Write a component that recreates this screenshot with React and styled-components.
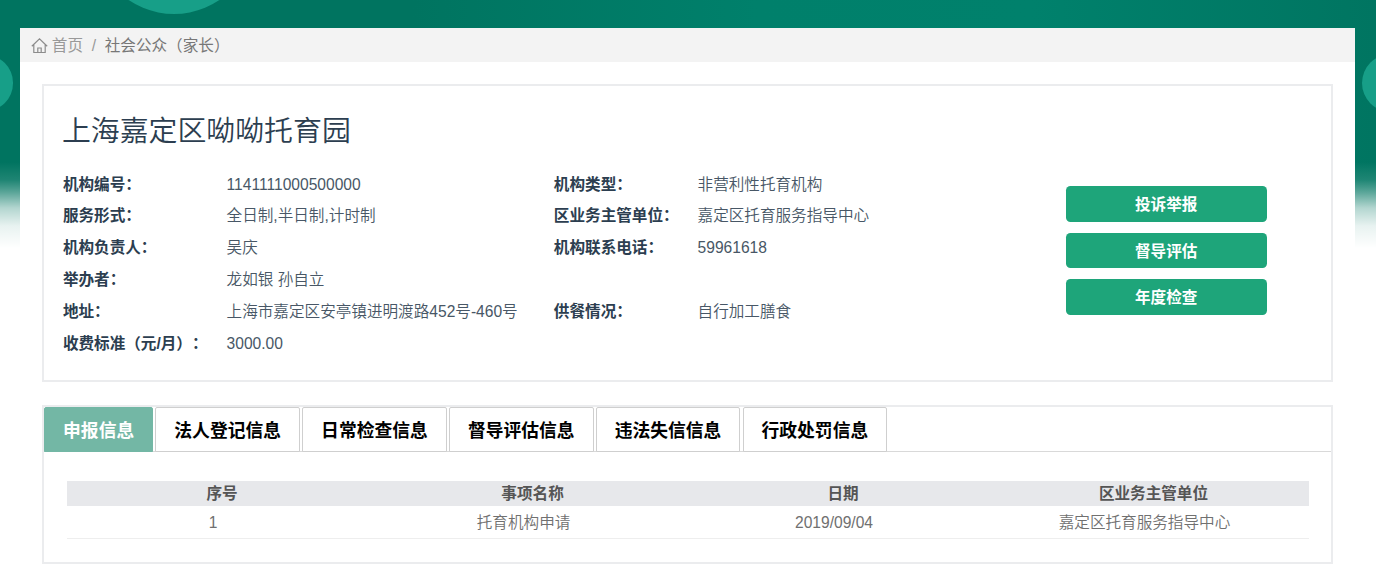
import React, { useState } from 'react';
import styled, { createGlobalStyle } from 'styled-components';

const GlobalStyle = createGlobalStyle`
  * {
    box-sizing: border-box;
  }

  body {
    margin: 0;
    background: #fff;
    font-family: 'Liberation Sans', 'Noto Sans CJK SC', sans-serif;
    font-size: 15.6px;
    color: #2c3e50;
    text-spacing-trim: space-all;
  }
`;

const Page = styled.div`
  position: relative;
  height: 581px;
  padding: 28.3px 20.6px 0 20.3px;
  overflow: hidden;
`;

const Banner = styled.div`
  position: absolute;
  top: 0;
  left: 0;
  right: 0;
  height: 250px;
  overflow: hidden;
  background:
    linear-gradient(
      to bottom,
      rgba(255, 255, 255, 0) 162px,
      rgba(255, 255, 255, 0.12) 180px,
      rgba(255, 255, 255, 0.35) 192px,
      rgba(255, 255, 255, 0.7) 208px,
      rgba(255, 255, 255, 0.91) 226px,
      #fff 248px
    ),
    linear-gradient(to right, #007460 0%, #007460 30%, #00806b 55%, #00816c 75%, #007561 100%);
`;

const Circle = styled.div`
  position: absolute;
  left: ${({ $x, $r }) => $x - $r}px;
  top: ${({ $y, $r }) => $y - $r}px;
  width: ${({ $r }) => $r * 2}px;
  height: ${({ $r }) => $r * 2}px;
  border-radius: 50%;
  background: #179f88;
`;

const Panel = styled.main`
  position: relative;
  height: 100%;
  background: #fff;
`;

const Breadcrumb = styled.nav`
  display: flex;
  align-items: center;
  height: 33.7px;
  padding: 1px 0 0 10.5px;
  background: #f3f3f3;
  color: #999;
  line-height: 34px;
`;

const HomeIcon = styled.svg`
  width: 17px;
  height: 16px;
  margin-right: 4px;
`;

const Separator = styled.span`
  margin: 0 8.7px;
`;

const Current = styled.span`
  color: #777;
`;

const Content = styled.div`
  display: flex;
  flex-direction: column;
  gap: 23px;
  padding: 22.5px 22.5px 0 22.2px;
`;

const Card = styled.section`
  height: ${({ $height }) => $height}px;
  border: 2px solid #ebecee;
`;

const Summary = styled.div`
  display: flex;
  justify-content: space-between;
  padding: 0 64.2px 0 18.4px;
`;

const Title = styled.h1`
  margin: 22.4px 0 15.8px -1px;
  font-size: 28.9px;
  font-weight: 350;
  line-height: 44px;
`;

const InfoGrid = styled.dl`
  display: grid;
  grid-template-columns: 163.7px 327.3px 143.7px 260px;
  grid-auto-rows: 31.8px;
  margin: 0;
  line-height: 31.8px;
  white-space: nowrap;
`;

const Label = styled.dt`
  grid-column: ${({ $second }) => ($second ? 3 : 1)};
  font-weight: 700;
`;

const Value = styled.dd`
  margin: 0;
  color: #485766;
  font-weight: 350;
`;

const Actions = styled.div`
  display: flex;
  flex-direction: column;
  gap: 11px;
  width: 201px;
  padding-top: 99.5px;
`;

const ActionButton = styled.button`
  height: 35.7px;
  padding: 1px 0 0;
  border: none;
  border-radius: 4.5px;
  background: #1ea57a;
  color: #fff;
  font-family: inherit;
  font-size: 15.6px;
  font-weight: 700;
  line-height: 36px;
  cursor: pointer;
`;

const TabBar = styled.div`
  display: flex;
  gap: 2.1px;
  height: 45px;
  border-bottom: 1px solid #d9d9d9;
`;

const Tab = styled.button`
  height: 45px;
  padding: 3px 18px 0;
  border: 1px solid ${({ $active }) => ($active ? '#73b7a5' : '#cfcfcf')};
  border-radius: 2px 2px 0 0;
  background: ${({ $active }) => ($active ? '#73b7a5' : '#fff')};
  color: ${({ $active }) => ($active ? '#fff' : '#000')};
  font-family: inherit;
  font-size: 17.8px;
  font-weight: 700;
  line-height: 40px;
  white-space: nowrap;
  cursor: pointer;

  &:first-child {
    padding: 3px 18px 0 17.6px;
  }
`;

const Table = styled.div`
  margin: 28.2px 22.2px 0 22.4px;
`;

const HeadRow = styled.div`
  display: grid;
  grid-template-columns: repeat(4, 1fr);
  height: 25px;
  background: #e7e8eb;
  color: #555;
  font-weight: 700;
  line-height: 26px;
  text-align: center;
`;

const BodyRow = styled.div`
  display: grid;
  grid-template-columns: repeat(4, 1fr);
  height: 33px;
  border-bottom: 1px solid #eee;
  color: #707070;
  font-weight: 350;
  line-height: 34px;
  text-align: center;

  span {
    padding-right: 18px;
  }
`;

const info = [
  { label: '机构编号：', value: '1141111000500000' },
  { label: '机构类型：', value: '非营利性托育机构', second: true },
  { label: '服务形式：', value: '全日制,半日制,计时制' },
  { label: '区业务主管单位：', value: '嘉定区托育服务指导中心', second: true },
  { label: '机构负责人：', value: '吴庆' },
  { label: '机构联系电话：', value: '59961618', second: true },
  { label: '举办者：', value: '龙如银 孙自立' },
  { label: '地址：', value: '上海市嘉定区安亭镇进明渡路452号-460号' },
  { label: '供餐情况：', value: '自行加工膳食', second: true },
  { label: '收费标准（元/月）：', value: '3000.00' },
];

const actions = ['投诉举报', '督导评估', '年度检查'];

const tabs = ['申报信息', '法人登记信息', '日常检查信息', '督导评估信息', '违法失信信息', '行政处罚信息'];

const columns = ['序号', '事项名称', '日期', '区业务主管单位'];

const rows = [['1', '托育机构申请', '2019/09/04', '嘉定区托育服务指导中心']];

const App = () => {
  const [activeTab, setActiveTab] = useState(0);

  return (
    <Page>
      <GlobalStyle />
      <Banner>
        <Circle $x={174} $y={-67} $r={81} />
        <Circle $x={-15} $y={83} $r={27.7} />
        <Circle $x={1391} $y={83} $r={29} />
      </Banner>
      <Panel>
        <Breadcrumb>
          <HomeIcon viewBox="0 0 17 16" fill="none" stroke="#8c8c8c" strokeWidth="1.2">
            <path d="M0.8 8.2 8.5 0.9l7.7 7.3M2.8 6.5v8h11.4v-8M6.8 14.5V10h3.4v4.5" />
          </HomeIcon>
          <span>首页</span>
          <Separator>/</Separator>
          <Current>社会公众（家长）</Current>
        </Breadcrumb>
        <Content>
          <Card $height={298}>
            <Summary>
              <div>
                <Title>上海嘉定区呦呦托育园</Title>
                <InfoGrid>
                  {info.map((item) => (
                    <React.Fragment key={item.label}>
                      <Label $second={item.second}>{item.label}</Label>
                      <Value>{item.value}</Value>
                    </React.Fragment>
                  ))}
                </InfoGrid>
              </div>
              <Actions>
                {actions.map((name) => (
                  <ActionButton key={name}>{name}</ActionButton>
                ))}
              </Actions>
            </Summary>
          </Card>
          <Card $height={158.5}>
            <TabBar>
              {tabs.map((name, idx) => (
                <Tab key={name} $active={idx === activeTab} onClick={() => setActiveTab(idx)}>
                  {name}
                </Tab>
              ))}
            </TabBar>
            <Table>
              <HeadRow>
                {columns.map((name) => (
                  <span key={name}>{name}</span>
                ))}
              </HeadRow>
              {rows.map((row) => (
                <BodyRow key={row[0]}>
                  {row.map((cell, idx) => (
                    <span key={idx}>{cell}</span>
                  ))}
                </BodyRow>
              ))}
            </Table>
          </Card>
        </Content>
      </Panel>
    </Page>
  );
};

export default App;
